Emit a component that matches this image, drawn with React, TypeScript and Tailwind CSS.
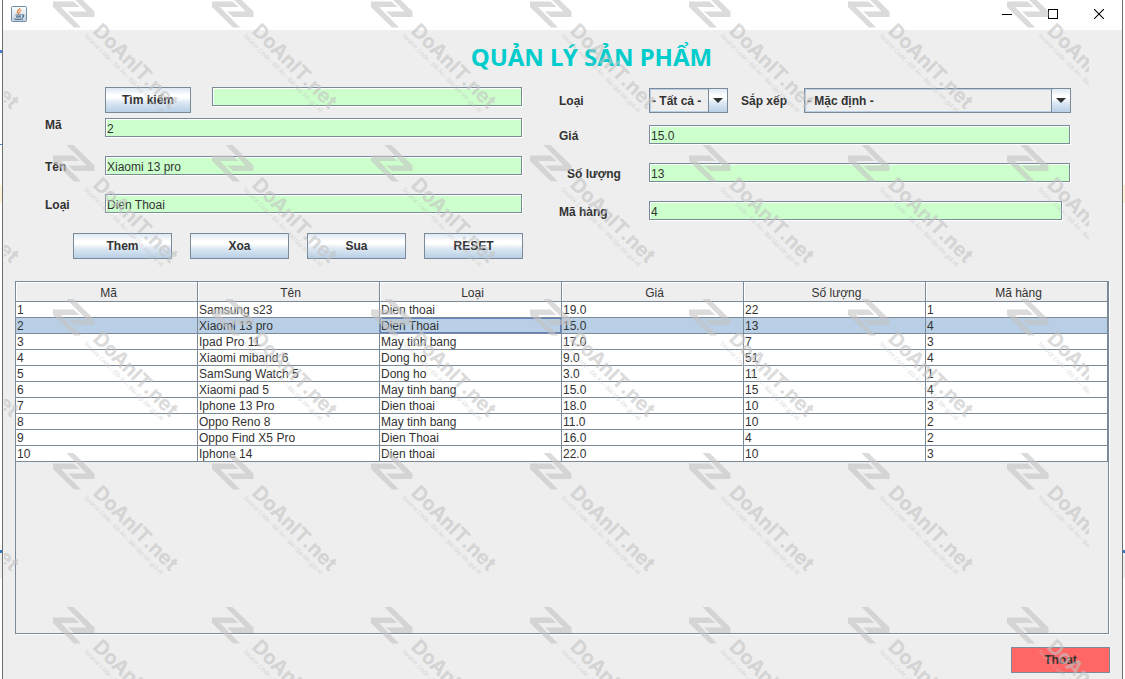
import { useState } from "react";

const columns = ["Mã", "Tên", "Loại", "Giá", "Số lượng", "Mã hàng"];

const products = [
  ["1", "Samsung s23", "Dien thoai", "19.0", "22", "1"],
  ["2", "Xiaomi 13 pro", "Dien Thoai", "15.0", "13", "4"],
  ["3", "Ipad Pro 11", "May tinh bang", "17.0", "7", "3"],
  ["4", "Xiaomi miband 6", "Dong ho", "9.0", "51", "4"],
  ["5", "SamSung Watch 5", "Dong ho", "3.0", "11", "1"],
  ["6", "Xiaomi pad 5", "May tinh bang", "15.0", "15", "4"],
  ["7", "Iphone 13 Pro", "Dien thoai", "18.0", "10", "3"],
  ["8", "Oppo Reno 8", "May tinh bang", "11.0", "10", "2"],
  ["9", "Oppo Find X5 Pro", "Dien Thoai", "16.0", "4", "2"],
  ["10", "Iphone 14", "Dien thoai", "22.0", "10", "3"],
];

const inputClass =
  "h-[19px] min-w-0 flex-1 border border-[#7a8a99] bg-[#ccffcc] px-px pt-0.5 text-xs text-[#333] shadow-[1px_1px_0_#fff,inset_1px_1px_0_#fff] outline-none";

const buttonClass =
  "h-[26px] border border-[#7a8a99] bg-[linear-gradient(#dde8f3,#fff_30%,#fff_40%,#dde8f3_60%,#b8cfe5)] text-xs font-bold";

function JavaIcon() {
  return (
    <svg width="16" height="16" viewBox="0 0 16 16" fill="none">
      <defs>
        <linearGradient id="java-bg" x1="0" y1="0" x2="0" y2="1">
          <stop offset="0" stopColor="#fff" />
          <stop offset="1" stopColor="#c3d0dc" />
        </linearGradient>
      </defs>
      <rect x="0.5" y="0.5" width="15" height="15" rx="1" fill="url(#java-bg)" stroke="#6f8ca6" />
      <path d="M8.8 2.2C9.4 4 5.6 4.7 6.5 6.3C6.8 7 7.5 7.5 7.8 8" stroke="#e8762c" strokeWidth="1.4" />
      <path d="M10.5 4.5C9 5.2 8 6 8.9 7.5" stroke="#e8762c" />
      <path d="M4.5 9H10.5M5 10.8H10M11 9C13.5 8.3 13.3 10.8 11 11.3" stroke="#44698c" strokeWidth="1.2" />
      <path d="M3.3 12.7C5 13.7 9.5 13.7 12 12.7" stroke="#44698c" strokeWidth="1.2" />
    </svg>
  );
}

function TitleBar() {
  return (
    <header className="flex h-[30px] justify-between bg-white pl-2">
      <div className="pt-1.5">
        <JavaIcon />
      </div>
      <div className="flex">
        <button aria-label="Minimize" className="flex h-[28px] w-[46px] items-center justify-center">
          <svg width="10" height="10" viewBox="0 0 10 10" stroke="#000">
            <path d="M0 5.5H10" />
          </svg>
        </button>
        <button aria-label="Maximize" className="flex h-[28px] w-[46px] items-center justify-center">
          <svg width="10" height="10" viewBox="0 0 10 10" fill="none" stroke="#000">
            <rect x="0.5" y="0.5" width="9" height="9" />
          </svg>
        </button>
        <button aria-label="Close" className="flex h-[28px] w-[46px] items-center justify-center">
          <svg width="10" height="10" viewBox="0 0 10 10" stroke="#000" strokeWidth="1.1">
            <path d="M0 0L10 10M10 0L0 10" />
          </svg>
        </button>
      </div>
    </header>
  );
}

function Combo({ id, option, className }: { id: string; option: string; className: string }) {
  return (
    <div className={`relative h-[25px] ${className}`}>
      <select
        id={id}
        className="h-full w-full appearance-none border border-[#7a8a99] bg-[#eee] pl-[2px] text-xs font-bold shadow-[inset_0_0_0_1px_#b8cfe5] outline-none"
      >
        <option>{option}</option>
      </select>
      <span className="pointer-events-none absolute inset-y-0 right-0 flex w-5 items-center justify-center border border-[#7a8a99] bg-[linear-gradient(#dde8f3,#fff_30%,#fff_40%,#dde8f3_60%,#b8cfe5)]">
        <svg width="10" height="5" viewBox="0 0 10 5" fill="#333">
          <path d="M0 0H10L5 5Z" />
        </svg>
      </span>
    </div>
  );
}

function LeftForm() {
  return (
    <div>
      <div className="flex items-start gap-[21px] pr-px pl-[60px]">
        <button className={`${buttonClass} w-[86px]`}>Tìm kiếm</button>
        <input aria-label="Tìm kiếm" className={inputClass} />
      </div>
      <div className="mt-[5px] flex flex-col gap-[19px] pr-px">
        <div className="flex items-center">
          <label htmlFor="ma" className="w-[60px] pb-1 leading-[15px]">Mã</label>
          <input id="ma" defaultValue="2" className={inputClass} />
        </div>
        <div className="flex items-center">
          <label htmlFor="ten" className="w-[60px] pt-0.5">Tên</label>
          <input id="ten" defaultValue="Xiaomi 13 pro" className={inputClass} />
        </div>
        <div className="flex items-center">
          <label htmlFor="loai" className="w-[60px] pt-0.5">Loại</label>
          <input id="loai" defaultValue="Dien Thoai" className={inputClass} />
        </div>
      </div>
      <div className="mt-5 flex justify-end gap-[18px]">
        <button className={`${buttonClass} w-[99px]`}>Them</button>
        <button className={`${buttonClass} w-[99px]`}>Xoa</button>
        <button className={`${buttonClass} w-[99px]`}>Sua</button>
        <button className={`${buttonClass} w-[99px]`}>RESET</button>
      </div>
    </div>
  );
}

function RightForm() {
  return (
    <div className="pt-px">
      <div className="flex items-center">
        <label htmlFor="filter" className="w-[90px]">Loại</label>
        <Combo id="filter" option="- Tất cả -" className="w-[79px]" />
        <label htmlFor="sort" className="w-[76px] pl-[13px]">Sắp xếp</label>
        <Combo id="sort" option="- Mặc định -" className="flex-1" />
      </div>
      <div className="mt-3 flex flex-col gap-[19px] pr-px">
        <div className="flex items-center">
          <label htmlFor="gia" className="w-[90px] pt-0.5">Giá</label>
          <input id="gia" defaultValue="15.0" className={inputClass} />
        </div>
        <div className="flex items-center">
          <label htmlFor="so-luong" className="w-[90px] pt-0.5 pl-2">Số lượng</label>
          <input id="so-luong" defaultValue="13" className={inputClass} />
        </div>
        <div className="flex items-center pr-2">
          <label htmlFor="ma-hang" className="w-[90px] pt-0.5">Mã hàng</label>
          <input id="ma-hang" defaultValue="4" className={inputClass} />
        </div>
      </div>
    </div>
  );
}

function ProductTable() {
  const [selected, setSelected] = useState("2");

  return (
    <div className="mr-[13px] ml-3 h-[353px] border border-[#7a8a99] shadow-[1px_1px_0_#fff]">
      <table className="w-full table-fixed border-separate border-spacing-0 text-xs">
        <thead>
          <tr>
            {columns.map((name) => (
              <th
                key={name}
                className="h-5 border-r border-b border-[#7a8a99] pt-1 pr-0 pb-0 pl-1 text-center leading-[15px] font-normal shadow-[inset_1px_1px_0_#fff]"
              >
                {name}
              </th>
            ))}
          </tr>
        </thead>
        <tbody>
          {products.map((row) => (
            <tr
              key={row[0]}
              onClick={() => setSelected(row[0])}
              className={row[0] === selected ? "bg-[#b8cfe5]" : "bg-white"}
            >
              {row.map((value, i) => (
                <td
                  key={columns[i]}
                  className={`h-4 border-r border-b border-[#7a8a99] pt-0.5 pr-0 pb-0 pl-px leading-[13px] ${
                    row[0] === selected && i === 2 ? "shadow-[inset_0_0_0_1px_#6382bf]" : ""
                  }`}
                >
                  {value}
                </td>
              ))}
            </tr>
          ))}
        </tbody>
      </table>
    </div>
  );
}

function Watermark() {
  const xs = [-106, 53, 212, 371, 530, 689, 848, 1007];
  const ys = [-9, 145, 299, 453, 607];

  return (
    <div className="pointer-events-none absolute inset-y-0 right-9 left-1 overflow-hidden">
      <svg className="h-full w-full opacity-60" fill="#c4c4c4" aria-hidden="true">
        {ys.map((y) =>
          xs.map((x) => (
            <g key={`${x}-${y}`} transform={`translate(${x - 4} ${y})`}>
              <path d="M0 10.5H20.5L26.5 16H8L28 36.5H21L0 16Z" />
              <path d="M41.5 26H21L15 20.5H33.5L13.5 0H20.5L41.5 20.5Z" />
              <text
                transform="translate(39 41) rotate(45)"
                fontSize="20"
                className="font-['Inter',sans-serif] font-bold"
              >
                DoAnIT.net
              </text>
              <text
                transform="translate(31 45) rotate(45)"
                fontSize="6"
                className="font-['Open_Sans',sans-serif] font-medium"
              >
                Source Code - Đồ Án - Bài tập lớn giá rẻ
              </text>
            </g>
          ))
        )}
      </svg>
    </div>
  );
}

function EdgeStrip({ left = false }: { left?: boolean }) {
  return (
    <div className="w-[2px] shrink-0 bg-white">
      <div className={`mt-[50px] h-[3px] ${left ? "bg-[#4a7fd6]" : ""}`} />
      <div className={`mt-[91px] h-px ${left ? "bg-[#4a7fd6]" : ""}`} />
      <div className="mt-[40px] h-[18px] bg-[#fdf3d8]" />
      <div className="mt-[347px] h-[3px] bg-[#2d7dc4]" />
      <div className="h-[25px] bg-[#f0f0f0]" />
    </div>
  );
}

function App() {
  return (
    <div className="relative flex min-h-screen overflow-hidden bg-white font-['Liberation_Sans',Arial,sans-serif] text-xs text-[#333]">
      <EdgeStrip left />
      <div className="min-w-0 flex-1 border-x border-[#6e6e6e] bg-[#eee]">
        <TitleBar />
        <main>
          <h1 className="h-[57px] pl-[58px] text-center font-['Noto_Sans',sans-serif] text-2xl leading-[54px] font-bold text-[#00cccc]">
            QUẢN LÝ SẢN PHẨM
          </h1>
          <form
            onSubmit={(e) => e.preventDefault()}
            className="mb-[22px] grid grid-cols-[478fr_512fr] gap-9 pr-[51px] pl-[42px] font-bold [&_input]:font-normal"
          >
            <LeftForm />
            <RightForm />
          </form>
          <ProductTable />
          <div className="mt-[13px] flex justify-end pr-3 pb-1.5">
            <button className="h-[26px] w-[99px] border border-[#7a8a99] bg-[#ff6666] text-xs font-bold">
              Thoat
            </button>
          </div>
        </main>
      </div>
      <EdgeStrip />
      <Watermark />
    </div>
  );
}

export default App;
